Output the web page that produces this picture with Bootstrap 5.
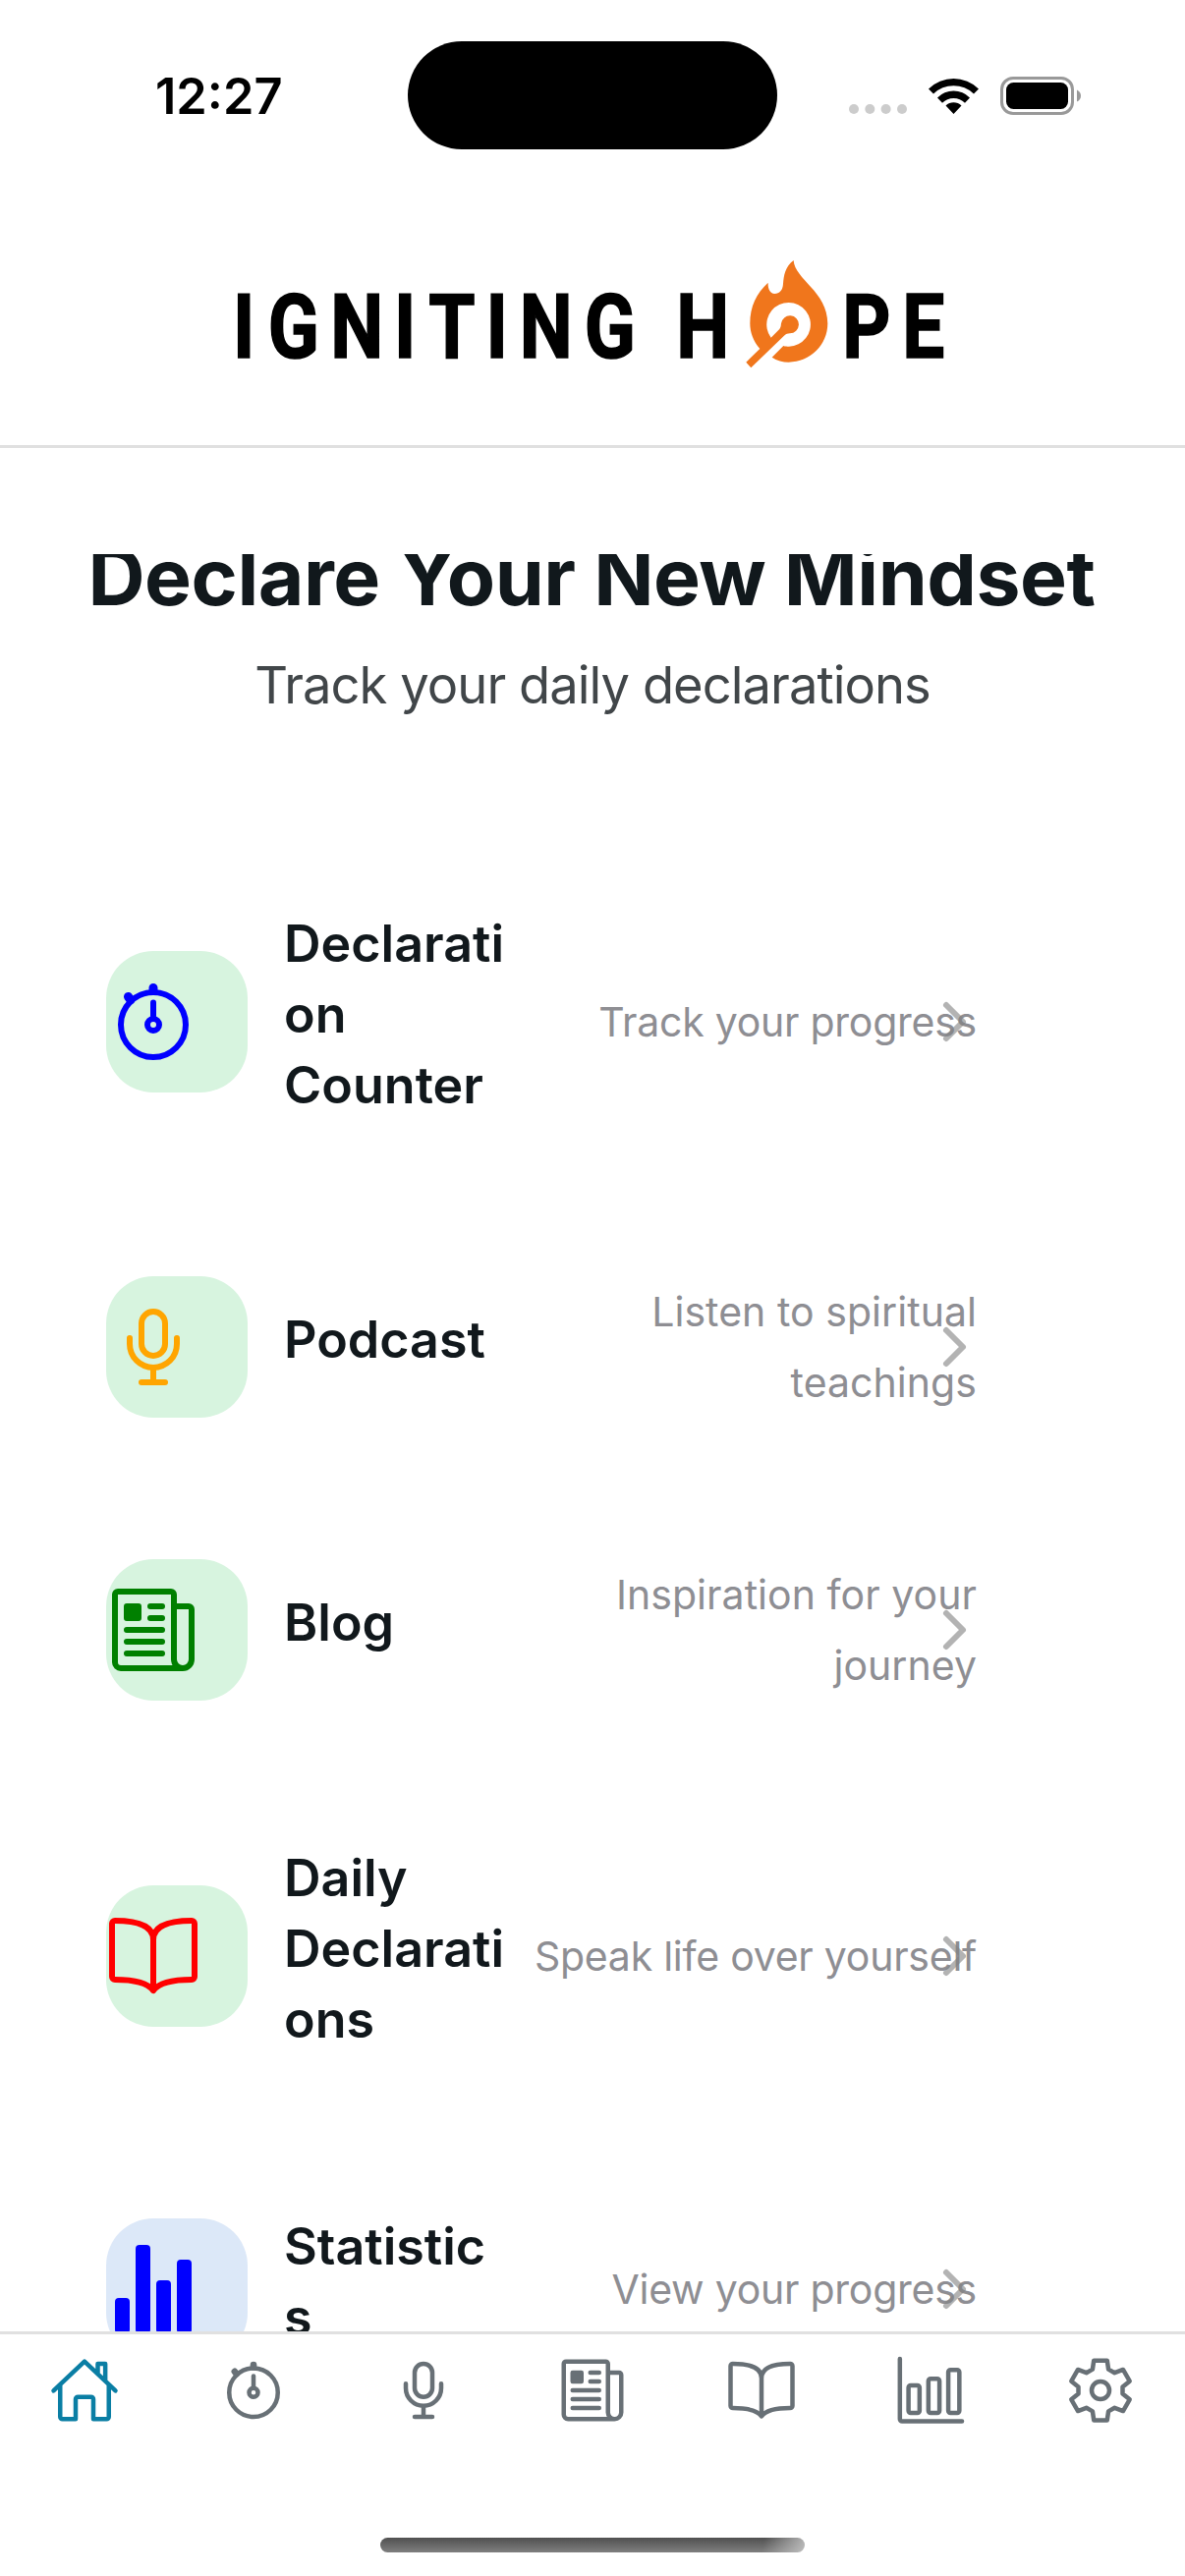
<!DOCTYPE html>
<html lang="en">
<head>
<meta charset="utf-8">
<meta name="viewport" content="width=device-width, initial-scale=1">
<title>Igniting Hope</title>
<link href="https://cdn.jsdelivr.net/npm/bootstrap@5.3.0/dist/css/bootstrap.min.css" rel="stylesheet">
<style>
  body { font-family: Inter, "Liberation Sans", sans-serif; color: #11181c; background: #fff; }
  .screen { width: 1206px; height: 2622px; }
  .status { height: 177px; padding: 42px 100px 0 158px; }
  .clock { width: 257px; height: 110px; font-size: 50.5px; font-weight: 600; line-height: 112px; letter-spacing: 0; color: #000; }
  .island { width: 376px; height: 110px; border-radius: 55px; background: #000; }
  .signals { height: 111px; margin: -1px 0 0 73px; }
  .brand { height: 279px; padding-top: 73px; border-bottom: 3px solid #e0e0e0; }
  .brand svg { overflow: visible; }
  .brand-name { font: 700 91px Roboto, "Liberation Sans", sans-serif; stroke: #000; stroke-width: 1.6; }
  .scroller { height: 1809px; margin-top: 108px; }
  .hero-title { font-size: 80.5px; font-weight: 700; line-height: 96px; margin: -25px 2px 26px 0; letter-spacing: -.5px; }
  .hero-sub { font-size: 52.5px; line-height: 72px; margin-bottom: 191px; color: #414649; letter-spacing: -.95px; }
  .entry { height: 144px; margin: 0 212px 144px 108px; }
  .entry.tall { height: 232px; }
  .entry.first { margin-bottom: 143px; }
  .entry.mid { height: 158px; }
  .tile { width: 144px; height: 144px; border-radius: 48px; background: #d7f4df; padding-top: 24px; }
  .tile.tint-blue { background: #dce8f8; }
  .tile svg { width: 96px; height: 96px; display: block; }
  .entry-name { width: 224px; margin-left: 37px; padding-bottom: 14px; font-size: 52px; font-weight: 600; line-height: 72px; white-space: nowrap; }
  .entry-note { font-size: 41px; line-height: 72px; color: #8e8e93; text-align: right; white-space: nowrap; letter-spacing: -.25px; }
  .entry-note.airy { letter-spacing: .05px; }
  .chev { right: 9px; top: 50%; width: 30px; height: 48px; margin-top: -24px; }
  .line-icon { fill: none; stroke: currentColor; stroke-width: 2; stroke-linecap: round; stroke-linejoin: round; }
  .c-blue { color: #00f; } .c-orange { color: orange; } .c-green { color: green; } .c-red { color: red; }
  .tabs { height: 249px; border-top: 3px solid #e0e0e0; color: #687076; }
  .tabs svg { width: 72px; height: 72px; margin-top: 21px; }
  .tabs .on { color: #0a7ea4; }
  .home-bar { width: 432px; height: 15px; border-radius: 8px; margin: 0 auto 24px;
    background: linear-gradient(100deg, transparent 90%, rgba(200,200,200,.85) 100%), linear-gradient(#505050, #7f7f7f); }
</style>
<script src="https://cdn.jsdelivr.net/npm/bootstrap@5.3.0/dist/js/bootstrap.bundle.min.js"></script>
</head>
<body>
<svg class="d-none">
  <symbol id="i-watch" viewBox="0 0 32 32"><g class="line-icon"><circle cx="16" cy="17" r="11"/><path d="M16 9.500V14"/><circle cx="16" cy="17" r="2"/><path d="M16 4.500V5.500M7.500 7.500L8.300 8.600" stroke-width="3"/></g></symbol>
  <symbol id="i-mic" viewBox="0 0 32 32"><g class="line-icon"><rect x="12" y="4" width="8" height="15" rx="4"/><path d="M8 13v2a8 8 0 0 0 16 0v-2M16 23v5M12 28h8"/></g></symbol>
  <symbol id="i-news" viewBox="0 0 32 32"><g class="line-icon"><path d="M26 29H5a2 2 0 0 1-2-2V4a1 1 0 0 1 1-1h18a1 1 0 0 1 1 1v22a3 3 0 0 0 6 0V9a1 1 0 0 0-1-1h-5M29 26a3 3 0 0 1-3 3M15 8h4M15 12h4M7 16h12M7 20h12M7 24h12"/><rect x="7" y="8" width="4" height="4" fill="currentColor"/></g></symbol>
  <symbol id="i-book" viewBox="0 0 32 32"><g class="line-icon"><path d="M2 5a1 1 0 0 1 1-1C10 4 16 5.500 16 10.500C16 5.500 22 4 29 4a1 1 0 0 1 1 1V23a1 1 0 0 1-1 1C22.500 24 18 25 16 27.700C14 25 9.500 24 3 24a1 1 0 0 1-1-1ZM16 10v17.500"/></g></symbol>
  <symbol id="i-bars" viewBox="0 0 32 32"><g fill="currentColor"><rect x="3" y="19" width="5" height="12" rx="1.300"/><rect x="10" y="1" width="5" height="30" rx="1.300"/><rect x="17" y="13" width="5" height="18" rx="1.300"/><rect x="24" y="6" width="5" height="25" rx="1.300"/></g></symbol>
  <symbol id="i-home" viewBox="0 0 32 32"><g class="line-icon"><path d="M2 16.200L16 2.900L30 16.200M5 13.500V28a1 1 0 0 0 1 1h6V20a1 1 0 0 1 1-1h6a1 1 0 0 1 1 1v9h6a1 1 0 0 0 1-1V13.500M22 8V4h3.400v7.500"/></g></symbol>
  <symbol id="i-chart" viewBox="0 0 32 32"><g class="line-icon"><path d="M1.700 1.800V29a1 1 0 0 0 1 1H29.800"/><rect x="5.600" y="13.800" width="5" height="12.400" rx="1"/><rect x="14.600" y="10.800" width="5" height="15.400" rx="1"/><rect x="23.600" y="6.800" width="5" height="19.400" rx="1"/></g></symbol>
  <symbol id="i-gear" viewBox="-16 -16 32 32"><g class="line-icon"><circle r="4"/><path d="M-3.600-9.500L-3-13.500H3L3.600-9.500L6.400-7.900L10.200-9.350L13.200-4.150L10-1.600V1.600L13.200 4.150L10.200 9.350L6.400 7.900L3.600 9.500L3 13.500H-3L-3.600 9.500L-6.400 7.900L-10.200 9.350L-13.200 4.150L-10 1.600V-1.600L-13.200-4.150L-10.200-9.350L-6.400-7.900Z"/></g></symbol>
  <symbol id="i-chev" viewBox="0 0 30 48"><path d="M8 7L25 24L8 41" fill="none" stroke="#808080" stroke-opacity=".6" stroke-width="6" stroke-linecap="round" stroke-linejoin="round"/></symbol>
</svg>

<div class="screen d-flex flex-column overflow-hidden">
  <div class="status d-flex flex-shrink-0">
    <div class="clock flex-shrink-0">12:27</div>
    <div class="island flex-shrink-0"></div>
    <svg class="signals flex-shrink-0" width="237" height="111" viewBox="864 41 237 111">
      <g fill="#ccc"><circle cx="869" cy="111" r="5"/><circle cx="885.300" cy="111" r="5"/><circle cx="901.600" cy="111" r="5"/><circle cx="918" cy="111" r="5"/></g>
      <path d="M970.500 116l-8-8.500a11.500 11.500 0 0 1 16 0zM954 99.500a23 23 0 0 1 33 0l-5 5.200a16.500 16.500 0 0 0-23 0zM945 90.500a36.500 36.500 0 0 1 51 0l-5 5a29.500 29.500 0 0 0-41 0z"/>
      <rect x="1019.500" y="79.500" width="72" height="36" rx="11.500" fill="none" stroke="#999" stroke-width="3"/>
      <rect x="1024" y="84" width="63" height="27" rx="7.500"/>
      <path d="M1096 91.500q4 2 4 6t-4 6z" fill="#999"/>
    </svg>
  </div>

  <header class="brand flex-shrink-0 d-flex justify-content-center align-items-start">
    <svg width="726" height="130" viewBox="240 250 726 130">
      <text class="brand-name" transform="scale(.84 1)" y="364.500" x="282.300 324.600 400.400 477.500 519.500 588.800 629.500 707.900 780 819.400 1020.600 1093.200">IGNITING HPE</text>
      <path transform="translate(620 250) scale(.3333)" fill="#f0761c" d="M563 45C566 103 667 140 667 238C667 303 614 356 548 356C530 356 512 351 497 341L532 306C537 308 543 308 549 308A67 67 0 1 0 494 281L520 255C525 248 524 244 525 238A27 27 0 1 1 552 268C545 269 540 269 534 275L433 373L418 356L460 315C440 292 430 265 430 238C430 185 450 145 485 113C484 130 490 147 505 147C520 147 530 136 531 117C533 90 537 65 563 45Z"/>
    </svg>
  </header>

  <main class="scroller flex-shrink-0 overflow-hidden">
    <div class="d-flex flex-column text-center text-nowrap">
      <h1 class="hero-title">Declare Your New Mindset</h1>
      <p class="hero-sub">Track your daily declarations</p>
    </div>
    <div class="entry tall first position-relative d-flex align-items-center">
      <div class="tile flex-shrink-0 c-blue"><svg><use href="#i-watch"/></svg></div>
      <div class="entry-name flex-shrink-0">Declarati<br>on<br>Counter</div>
      <div class="entry-note ms-auto">Track your progress</div>
      <svg class="chev position-absolute"><use href="#i-chev"/></svg>
    </div>
    <div class="entry position-relative d-flex align-items-center">
      <div class="tile flex-shrink-0 c-orange"><svg><use href="#i-mic"/></svg></div>
      <div class="entry-name flex-shrink-0">Podcast</div>
      <div class="entry-note airy ms-auto">Listen to spiritual<br>teachings</div>
      <svg class="chev position-absolute"><use href="#i-chev"/></svg>
    </div>
    <div class="entry position-relative d-flex align-items-center">
      <div class="tile flex-shrink-0 c-green"><svg><use href="#i-news"/></svg></div>
      <div class="entry-name flex-shrink-0">Blog</div>
      <div class="entry-note airy ms-auto">Inspiration for your<br>journey</div>
      <svg class="chev position-absolute"><use href="#i-chev"/></svg>
    </div>
    <div class="entry tall position-relative d-flex align-items-center">
      <div class="tile flex-shrink-0 c-red"><svg><use href="#i-book"/></svg></div>
      <div class="entry-name flex-shrink-0">Daily<br>Declarati<br>ons</div>
      <div class="entry-note ms-auto">Speak life over yourself</div>
      <svg class="chev position-absolute"><use href="#i-chev"/></svg>
    </div>
    <div class="entry mid position-relative d-flex align-items-center">
      <div class="tile tint-blue flex-shrink-0 c-blue"><svg><use href="#i-bars"/></svg></div>
      <div class="entry-name flex-shrink-0">Statistic<br>s</div>
      <div class="entry-note ms-auto">View your progress</div>
      <svg class="chev position-absolute"><use href="#i-chev"/></svg>
    </div>
  </main>

  <footer class="tabs flex-shrink-0 d-flex flex-column justify-content-between">
    <nav class="row g-0 text-center">
      <div class="col on"><svg><use href="#i-home"/></svg></div>
      <div class="col"><svg><use href="#i-watch"/></svg></div>
      <div class="col"><svg><use href="#i-mic"/></svg></div>
      <div class="col"><svg><use href="#i-news"/></svg></div>
      <div class="col"><svg><use href="#i-book"/></svg></div>
      <div class="col"><svg><use href="#i-chart"/></svg></div>
      <div class="col"><svg><use href="#i-gear"/></svg></div>
    </nav>
    <div class="home-bar"></div>
  </footer>
</div>
</body>
</html>
